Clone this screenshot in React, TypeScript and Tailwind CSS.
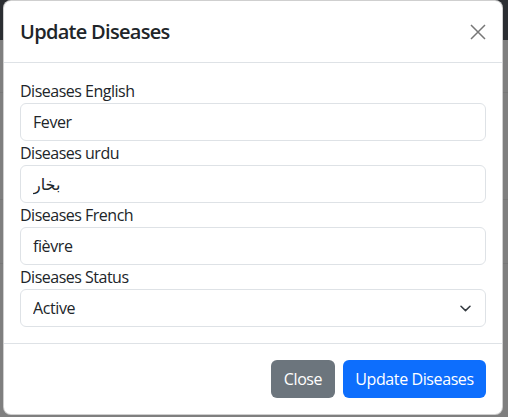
import { useState } from "react";

const font = {
  fontFamily: '"Segoe UI", "Open Sans", "DejaVu Sans", sans-serif',
};

function Field({
  label,
  value,
  onChange,
}: {
  label: string;
  value: string;
  onChange: (v: string) => void;
}) {
  return (
    <div>
      <label className="block text-[16px] leading-[24px] tracking-[-0.5px] text-[#212529]">
        {label}
      </label>
      <input
        value={value}
        onChange={(e) => onChange(e.target.value)}
        className="block h-[38px] w-full rounded-[6px] border border-[#dee2e6] bg-white px-3 text-[16px] tracking-[-0.4px] text-[#212529] outline-none"
        style={font}
      />
    </div>
  );
}

export default function App() {
  const [english, setEnglish] = useState("Fever");
  const [urdu, setUrdu] = useState("بخار");
  const [french, setFrench] = useState("fièvre");
  const [status, setStatus] = useState("Active");

  return (
    <div
      className="relative h-[417px] w-[508px] overflow-hidden bg-[#7f7f7f]"
      style={font}
    >
      {/* page behind the backdrop */}
      <div className="h-[40px] bg-[#2b2e32]" />
      <div className="mt-[52px] h-px bg-[#777]" />
      <div className="mt-[106px] h-px bg-[#777]" />
      <div className="mt-[63px] h-px bg-[#777]" />

      {/* modal */}
      <div className="absolute left-[3px] top-0 w-[500px] rounded-lg border border-[#00000030] bg-white">
        <div className="flex h-[62px] items-center justify-between border-b border-[#dee2e6] px-4">
          <h5 className="text-[20px] font-semibold leading-[30px] tracking-[-0.7px] text-[#212529]">
            Update Diseases
          </h5>
          <button className="flex h-4 w-4 items-center justify-center text-[#777]">
            <svg width="16" height="16" viewBox="0 0 16 16">
              <path
                d="M1 1 15 15M15 1 1 15"
                stroke="currentColor"
                strokeWidth="1.5"
                fill="none"
              />
            </svg>
          </button>
        </div>

        <div className="border-b border-[#dee2e6] p-4">
          <Field label="Diseases English" value={english} onChange={setEnglish} />
          <Field label="Diseases urdu" value={urdu} onChange={setUrdu} />
          <Field label="Diseases French" value={french} onChange={setFrench} />
          <div>
            <label className="block text-[16px] leading-[24px] tracking-[-0.5px] text-[#212529]">
              Diseases Status
            </label>
            <div className="relative">
              <select
                value={status}
                onChange={(e) => setStatus(e.target.value)}
                className="block h-[38px] w-full appearance-none rounded-[6px] border border-[#dee2e6] bg-white px-3 text-[16px] tracking-[-0.4px] text-[#212529] outline-none"
                style={font}
              >
                <option>Active</option>
                <option>Inactive</option>
              </select>
              <svg
                className="pointer-events-none absolute right-[15px] top-[16px]"
                width="11"
                height="7"
                viewBox="0 0 11 7"
              >
                <path
                  d="M1 1.2 5.5 5.6 10 1.2"
                  stroke="#343a40"
                  strokeWidth="1.5"
                  strokeLinecap="round"
                  strokeLinejoin="round"
                  fill="none"
                />
              </svg>
            </div>
          </div>
        </div>

        <div className="flex justify-end gap-2 px-4 pb-4 pt-4">
          <button className="h-[38px] w-[64px] rounded-[6px] bg-[#6c757d] text-[16px] tracking-[-0.4px] text-white">
            Close
          </button>
          <button className="h-[38px] w-[143px] rounded-[6px] bg-[#0d6efd] text-[16px] tracking-[-0.4px] text-white">
            Update Diseases
          </button>
        </div>
      </div>
    </div>
  );
}
